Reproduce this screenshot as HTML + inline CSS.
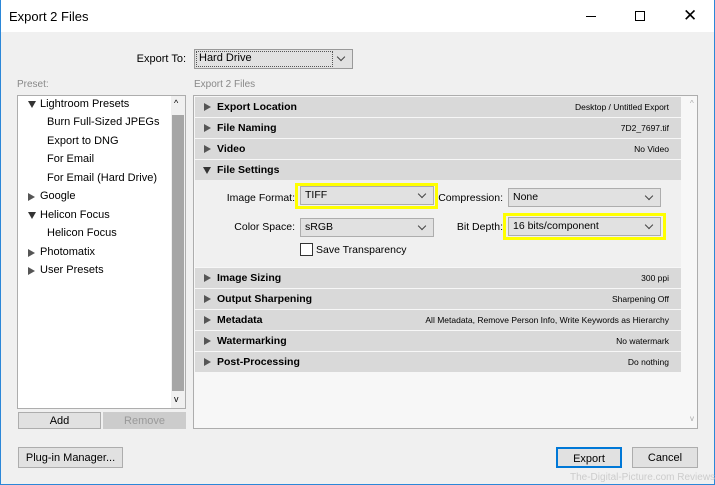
<!DOCTYPE html><html><head><style>
*{margin:0;padding:0;box-sizing:border-box}
body{width:715px;height:485px;overflow:hidden;font-family:"Liberation Sans",sans-serif;font-size:11px;color:#000;background:#f0f0f0;position:relative}
.a{position:absolute;white-space:nowrap}
.win{position:absolute;left:0;top:0;width:715px;height:485px;border:1px solid #2b87d8;border-top:none}
.dd{position:absolute;background:#e1e1e1;border:1px solid #adadad;padding:2px 4px;font-size:10.5px;white-space:nowrap}
.dd:after{content:"";position:absolute;right:8px;top:4px;width:5px;height:5px;border-right:1px solid #444;border-bottom:1px solid #444;transform:rotate(45deg)}
.hd{position:absolute;left:195px;width:486px;height:20px;background:#d9d9d9;font-weight:bold;font-size:10.5px;white-space:nowrap}
.hd .t{position:absolute;left:22px;top:4px}
.hd .r{position:absolute;right:12px;top:5px;font-weight:normal;font-size:8.5px}
.tri{position:absolute;left:9px;top:6px;width:0;height:0;border-left:7px solid #555;border-top:4px solid transparent;border-bottom:4px solid transparent}
.trd{position:absolute;left:8px;top:7px;width:0;height:0;border-top:7px solid #333;border-left:4px solid transparent;border-right:4px solid transparent}
.btn{position:absolute;background:#e1e1e1;border:1px solid #adadad;text-align:center;font-size:11px;white-space:nowrap}
.ti{position:absolute;font-size:11px;white-space:nowrap}
.yel{position:absolute;border:3px solid #ffff00}
.lb{position:absolute;white-space:nowrap;text-align:right;font-size:10.5px}
</style></head><body>
<div class="win"></div>
<div class="a" style="left:1px;top:0;width:713px;height:32px;background:#fff"></div>
<div class="a" style="left:9px;top:9px;font-size:13px">Export 2 Files</div>
<div class="a" style="left:586px;top:16px;width:10px;height:1px;background:#000"></div>
<div class="a" style="left:635px;top:11px;width:10px;height:10px;border:1px solid #000"></div>
<div class="a" style="left:683px;top:7px;font-size:17px;line-height:17px">✕</div>

<div class="lb" style="right:529px;top:53px;font-size:11px">Export To:</div>
<div class="dd" style="left:194px;top:49px;width:159px;height:20px;border-color:#999;font-size:11px"><div style="position:absolute;left:1px;top:1px;width:137px;height:16px;border:1px dotted #555"></div>Hard Drive</div>
<div class="a" style="left:17px;top:79px;color:#888;font-size:10px">Preset:</div>
<div class="a" style="left:194px;top:79px;color:#888;font-size:10px">Export 2 Files</div>

<div class="a" style="left:17px;top:95px;width:169px;height:314px;background:#fff;border:1px solid #adadad"></div>
<div class="a" style="left:171px;top:96px;width:14px;height:312px;background:#f0f0f0"></div>
<div class="a" style="left:172px;top:115px;width:12px;height:276px;background:#a6a6a6"></div>
<div class="a" style="left:174px;top:98px;font-size:9px">^</div>
<div class="a" style="left:174px;top:394px;font-size:9px">v</div>
<div style="position:absolute;left:20px;top:98px">
<div class="trd" style="left:8px;top:3px"></div><div class="ti" style="left:20px;top:0">Lightroom Presets</div>
<div class="ti" style="left:27px;top:18px">Burn Full-Sized JPEGs</div>
<div class="ti" style="left:27px;top:37px">Export to DNG</div>
<div class="ti" style="left:27px;top:55px">For Email</div>
<div class="ti" style="left:27px;top:74px">For Email (Hard Drive)</div>
<div class="tri" style="left:8px;top:95px"></div><div class="ti" style="left:20px;top:92px">Google</div>
<div class="trd" style="left:8px;top:114px"></div><div class="ti" style="left:20px;top:111px">Helicon Focus</div>
<div class="ti" style="left:27px;top:129px">Helicon Focus</div>
<div class="tri" style="left:8px;top:151px"></div><div class="ti" style="left:20px;top:148px">Photomatix</div>
<div class="tri" style="left:8px;top:169px"></div><div class="ti" style="left:20px;top:166px">User Presets</div>
</div>
<div class="btn" style="left:18px;top:412px;width:83px;height:17px;padding-top:2px">Add</div>
<div class="btn" style="left:103px;top:412px;width:83px;height:17px;padding-top:2px;color:#999;background:#ccc;border-color:#ccc">Remove</div>

<div class="a" style="left:193px;top:95px;width:505px;height:334px;background:#f7f7f7;border:1px solid #adadad"></div>
<div class="a" style="left:690px;top:99px;font-size:8px;color:#aaa">^</div>
<div class="a" style="left:690px;top:414px;font-size:8px;color:#aaa">v</div>

<div class="hd" style="top:97px"><div class="tri"></div><div class="t">Export Location</div><div class="r">Desktop / Untitled Export</div></div>
<div class="hd" style="top:118px"><div class="tri"></div><div class="t">File Naming</div><div class="r">7D2_7697.tif</div></div>
<div class="hd" style="top:139px"><div class="tri"></div><div class="t">Video</div><div class="r">No Video</div></div>
<div class="hd" style="top:160px"><div class="trd"></div><div class="t">File Settings</div></div>
<div class="a" style="left:195px;top:180px;width:486px;height:87px;background:#f0f0f0"></div>
<div class="lb" style="right:420px;top:192px">Image Format:</div>
<div class="dd" style="left:300px;top:186px;width:134px;height:19px">TIFF</div>
<div class="yel" style="left:295px;top:183px;width:143px;height:26px"></div>
<div class="lb" style="right:212px;top:192px">Compression:</div>
<div class="dd" style="left:508px;top:188px;width:153px;height:19px">None</div>
<div class="lb" style="right:420px;top:221px">Color Space:</div>
<div class="dd" style="left:300px;top:218px;width:134px;height:19px">sRGB</div>
<div class="lb" style="right:212px;top:221px">Bit Depth:</div>
<div class="dd" style="left:508px;top:217px;width:153px;height:19px">16 bits/component</div>
<div class="yel" style="left:503px;top:213px;width:163px;height:27px"></div>
<div class="a" style="left:300px;top:243px;width:13px;height:13px;background:#fff;border:1px solid #333"></div>
<div class="a" style="left:316px;top:244px;font-size:10.5px">Save Transparency</div>

<div class="hd" style="top:268px"><div class="tri"></div><div class="t">Image Sizing</div><div class="r">300 ppi</div></div>
<div class="hd" style="top:289px"><div class="tri"></div><div class="t">Output Sharpening</div><div class="r">Sharpening Off</div></div>
<div class="hd" style="top:310px"><div class="tri"></div><div class="t">Metadata</div><div class="r">All Metadata, Remove Person Info, Write Keywords as Hierarchy</div></div>
<div class="hd" style="top:331px"><div class="tri"></div><div class="t">Watermarking</div><div class="r">No watermark</div></div>
<div class="hd" style="top:352px"><div class="tri"></div><div class="t">Post-Processing</div><div class="r">Do nothing</div></div>

<div class="btn" style="left:18px;top:447px;width:105px;height:21px;padding-top:4px">Plug-in Manager...</div>
<div class="btn" style="left:556px;top:447px;width:66px;height:21px;padding-top:4px;border:2px solid #0078d7">Export</div>
<div class="btn" style="left:632px;top:447px;width:66px;height:21px;padding-top:4px">Cancel</div>
<div class="a" style="left:570px;top:472px;font-size:10px;color:#ccc">The-Digital-Picture.com Reviews</div>
</body></html>
